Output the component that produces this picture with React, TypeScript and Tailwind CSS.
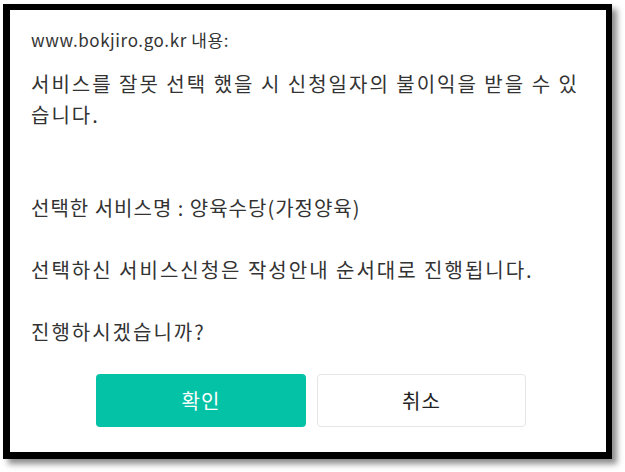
import React from "react";

export default function App() {
  const font = { fontFamily: '"Noto Sans CJK KR", "Noto Sans", sans-serif' };
  return (
    <div className="w-[625px] h-[472px] bg-white overflow-hidden" style={font}>
      <div className="ml-[3px] mt-[4px] w-[609px] h-[455px] border-t-[6px] border-l-[7px] border-r-[6px] border-b-[7px] border-black bg-white shadow-[5px_5px_6px_rgba(0,0,0,0.45)] flex flex-col">
        <div className="pl-[21px] pr-[14px] pt-[19px]">
          <div className="text-[17px] leading-[22px] tracking-[0.6px] text-[#333333]">www.bokjiro.go.kr 내용:</div>
          <div className="mt-[17px] text-[20px] leading-[31px] tracking-[2px] text-[#333333]">
            <div>서비스를 잘못 선택 했을 시 신청일자의 불이익을 받을 수 있습니다.</div>
            <div className="h-[31px]" />
            <div className="h-[31px]" />
            <div className="tracking-[1px]">선택한 서비스명 : 양육수당(가정양육)</div>
            <div className="h-[31px]" />
            <div>선택하신 서비스신청은 작성안내 순서대로 진행됩니다.</div>
            <div className="h-[31px]" />
            <div>진행하시겠습니까?</div>
          </div>
        </div>
        <div className="mt-[27px] flex gap-[11px] pl-[86px]">
          <button className="w-[210px] h-[53px] rounded-[4px] bg-[#04c2a6] text-white text-[20px] tracking-[1px]">확인</button>
          <button className="w-[209px] h-[53px] rounded-[4px] bg-white border border-[#e6e6e6] text-[#222222] text-[20px] tracking-[1px]">취소</button>
        </div>
      </div>
    </div>
  );
}
